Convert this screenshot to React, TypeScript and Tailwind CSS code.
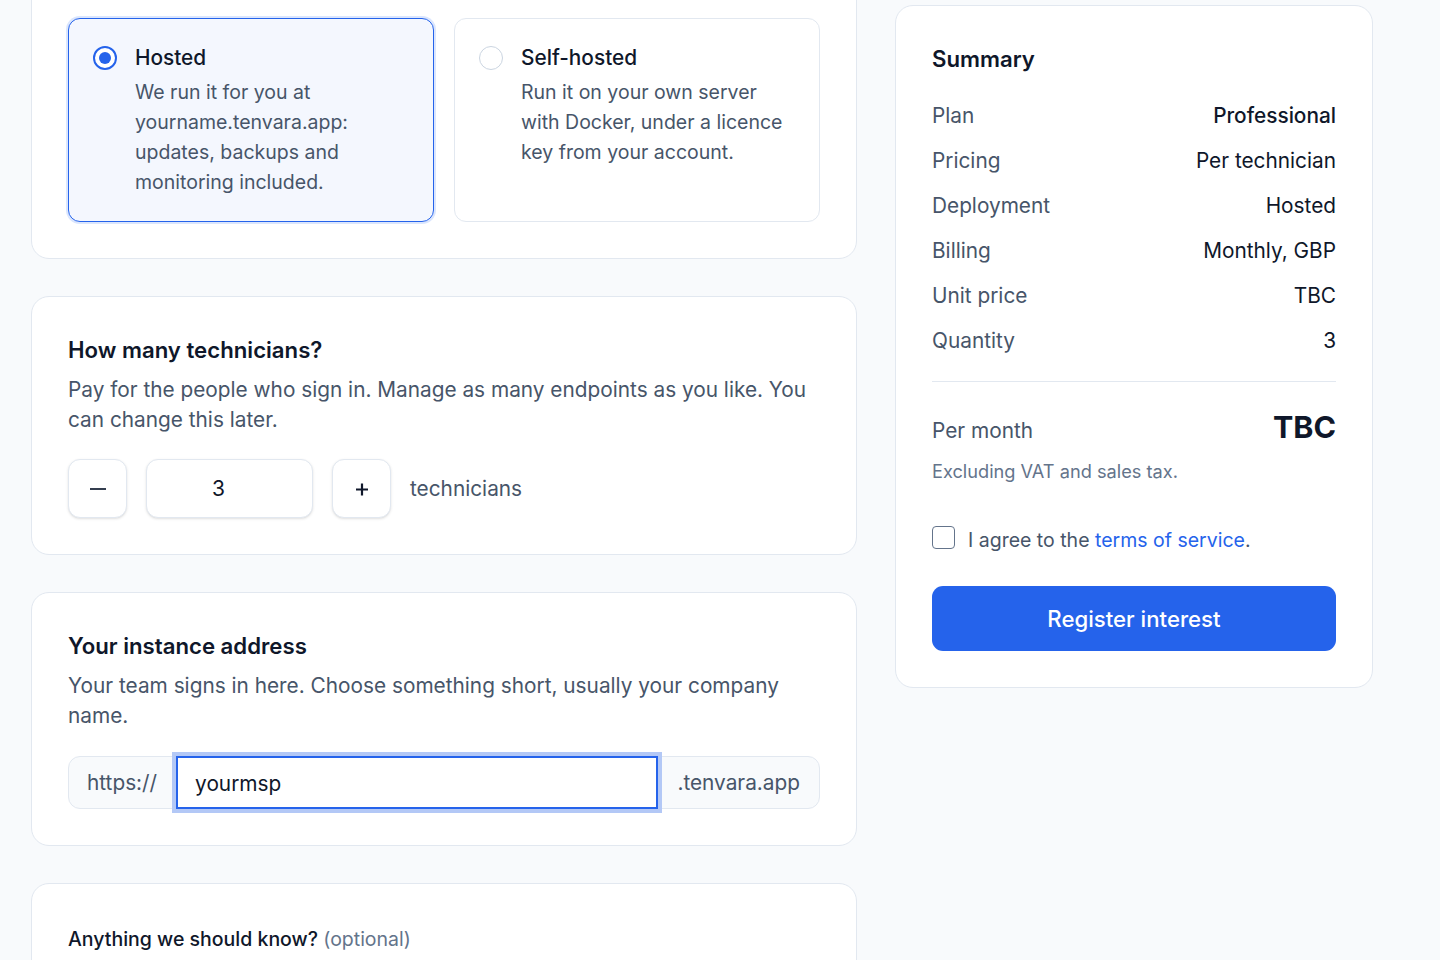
import { useState } from "react";

const rows: { label: string; value: string; strong?: boolean }[] = [
  { label: "Plan", value: "Professional", strong: true },
  { label: "Pricing", value: "Per technician" },
  { label: "Deployment", value: "Hosted" },
  { label: "Billing", value: "Monthly, GBP" },
  { label: "Unit price", value: "TBC" },
  { label: "Quantity", value: "3" },
];

function DeployOption({
  title,
  body,
  selected,
}: {
  title: string;
  body: string;
  selected?: boolean;
}) {
  return (
    <div
      className={
        selected
          ? "flex flex-1 gap-[18px] rounded-[12px] border-[1.5px] border-[#2563eb] bg-[#f4f7fe] px-[24px] pb-[24px] pt-[24px] ring-2 ring-[#dbe6fd]"
          : "flex flex-1 gap-[18px] rounded-[12px] border border-[#e2e8f0] bg-white px-[24px] pb-[24px] pt-[24px]"
      }
    >
      <div className="pt-[3px]">
        {selected ? (
          <span className="flex h-[24px] w-[24px] items-center justify-center rounded-full border-2 border-[#2563eb] bg-white">
            <span className="h-[12px] w-[12px] rounded-full bg-[#2563eb]" />
          </span>
        ) : (
          <span className="block h-[24px] w-[24px] rounded-full border-[1.5px] border-[#cbd5e1] bg-white" />
        )}
      </div>
      <div className="flex-1">
        <p className="text-[20.8px] font-medium leading-[30px] text-[#0f172a]">
          {title}
        </p>
        <p className="mt-[4px] text-[19.5px] leading-[30px] text-[#475569]">
          {body}
        </p>
      </div>
    </div>
  );
}

export default function App() {
  const [count, setCount] = useState(3);
  const [subdomain, setSubdomain] = useState("yourmsp");

  return (
    <div className="min-h-screen overflow-hidden bg-[#f8fafc] font-['Inter',sans-serif] text-[#0f172a]">
      <div className="flex items-start gap-[38px] pl-[31px]">
        {/* left column */}
        <div className="-mt-[20px] flex w-[826px] flex-col gap-[37px]">
          <section className="rounded-[18px] border border-[#e2e8f0] bg-white p-[36px] pt-[37px]">
            <div className="flex gap-[20px]">
              <DeployOption
                selected
                title="Hosted"
                body="We run it for you at yourname.tenvara.app: updates, backups and monitoring included."
              />
              <DeployOption
                title="Self-hosted"
                body="Run it on your own server with Docker, under a licence key from your account."
              />
            </div>
          </section>

          <section className="rounded-[18px] border border-[#e2e8f0] bg-white p-[36px]">
            <h2 className="text-[22.2px] font-semibold leading-[34px] text-[#0f172a]">
              How many technicians?
            </h2>
            <p className="mt-[8px] text-[20.8px] leading-[30px] text-[#475569]">
              Pay for the people who sign in. Manage as many endpoints as you
              like. You can change this later.
            </p>
            <div className="mt-[24px] flex items-center gap-[19px]">
              <button
                onClick={() => setCount((c) => Math.max(1, c - 1))}
                className="flex h-[59px] w-[59px] items-center justify-center rounded-[12px] border border-[#e2e8f0] bg-white text-[#1e293b] shadow-sm"
              >
                <svg width="18" height="18" viewBox="0 0 18 18" fill="none">
                  <path d="M1 9h16" stroke="currentColor" strokeWidth="1.8" />
                </svg>
              </button>
              <div className="flex h-[59px] w-[167px] items-center justify-center rounded-[12px] border border-[#e2e8f0] bg-white pr-[22px] text-[21px] text-[#0f172a] shadow-sm">
                {count}
              </div>
              <button
                onClick={() => setCount((c) => c + 1)}
                className="flex h-[59px] w-[59px] items-center justify-center rounded-[12px] border border-[#e2e8f0] bg-white text-[#0f172a] shadow-sm"
              >
                <svg width="14" height="14" viewBox="0 0 14 14" fill="none">
                  <path
                    d="M1 7.5h12M7 1.5v12"
                    stroke="currentColor"
                    strokeWidth="2.2"
                  />
                </svg>
              </button>
              <span className="text-[20.8px] text-[#475569]">technicians</span>
            </div>
          </section>

          <section className="rounded-[18px] border border-[#e2e8f0] bg-white p-[36px]">
            <h2 className="text-[22.2px] font-semibold leading-[34px] text-[#0f172a]">
              Your instance address
            </h2>
            <p className="mt-[8px] text-[20.8px] leading-[30px] text-[#475569]">
              Your team signs in here. Choose something short, usually your
              company name.
            </p>
            <div className="mt-[25px] flex h-[53px] items-stretch rounded-[12px] border border-[#e2e8f0] bg-[#f8fafc]">
              <span className="flex items-center pl-[18px] pr-[19px] text-[20.8px] text-[#475569]">
                https://
              </span>
              <input
                value={subdomain}
                onChange={(e) => setSubdomain(e.target.value)}
                className="-my-px min-w-0 flex-1 border-2 border-[#2563eb] bg-white px-[17px] pt-[3px] text-[20.8px] text-[#0f172a] outline-none ring-4 ring-[#b3c8f6]"
              />
              <span className="flex items-center pl-[19px] pr-[19px] text-[20.8px] text-[#475569]">
                .tenvara.app
              </span>
            </div>
          </section>

          <section className="rounded-[18px] border border-[#e2e8f0] bg-white p-[36px]">
            <label className="block pt-[1px] text-[19.5px] font-medium leading-[36px] text-[#0f172a]">
              Anything we should know?{" "}
              <span className="font-normal text-[#64748b]">(optional)</span>
            </label>
            <textarea className="mt-[10px] h-[120px] w-full rounded-[12px] border border-[#e2e8f0] bg-white p-[16px] text-[19.5px]" />
          </section>
        </div>

        {/* summary */}
        <aside className="mt-[5px] w-[478px] rounded-[18px] border border-[#e2e8f0] bg-white p-[36px]">
          <h2 className="text-[22.2px] font-semibold leading-[34px] text-[#0f172a]">
            Summary
          </h2>
          <dl className="mt-[25px] flex flex-col gap-[15px]">
            {rows.map((r) => (
              <div
                key={r.label}
                className="flex items-center justify-between text-[20.8px] leading-[30px]"
              >
                <dt className="text-[#475569]">{r.label}</dt>
                <dd
                  className={
                    r.strong
                      ? "font-medium text-[#0f172a]"
                      : "text-[#0f172a]"
                  }
                >
                  {r.value}
                </dd>
              </div>
            ))}
          </dl>
          <div className="mt-[25px] h-px bg-[#e2e8f0]" />
          <div className="mt-[25px] flex items-end justify-between">
            <span className="pb-[1px] text-[20.8px] leading-[30px] text-[#475569]">
              Per month
            </span>
            <span className="text-[30.5px] font-bold leading-[40px] text-[#0f172a]">
              TBC
            </span>
          </div>
          <p className="mt-[11px] text-[18.2px] leading-[26px] text-[#64748b]">
            Excluding VAT and sales tax.
          </p>
          <label className="mt-[41px] flex items-center gap-[13px] text-[19.5px] leading-[30px] text-[#475569]">
            <span className="-mt-[6px] block h-[23px] w-[23px] rounded-[4px] border-[1.5px] border-[#64748b] bg-white" />
            <span>
              I agree to the{" "}
              <a className="text-[#2563eb]">terms of service</a>.
            </span>
          </label>
          <button className="mt-[31px] flex h-[65px] w-full items-center justify-center rounded-[11px] bg-[#2563eb] text-[22.2px] font-medium text-white">
            Register interest
          </button>
        </aside>
      </div>
    </div>
  );
}
